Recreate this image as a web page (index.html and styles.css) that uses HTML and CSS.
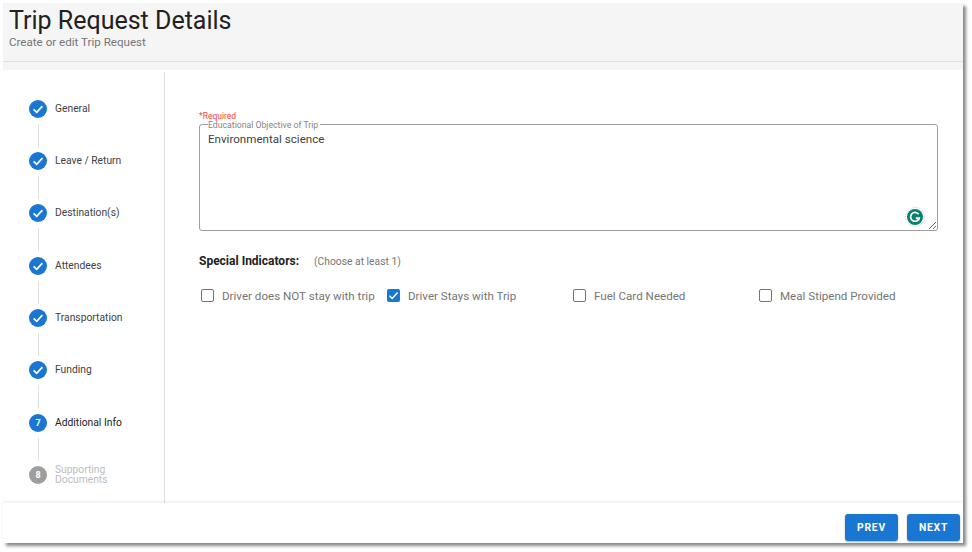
FILE: index.html
```html
<!DOCTYPE html>
<html lang="en">
<head>
<meta charset="utf-8">
<title>Trip Request Details</title>
<link rel="stylesheet" href="styles.css">
</head>
<body>
<div class="window">
  <header class="page-header">
    <div class="header-text">
      <h1 class="title">Trip Request Details</h1>
      <p class="subtitle">Create or edit Trip Request</p>
    </div>
    <div class="header-strip"></div>
  </header>
  <div class="main">
    <nav class="stepper">
      <div class="step"><span class="dot"><svg class="check" viewBox="0 0 18 18"><path d="M4.6 9.4 7.7 12.4 13.4 6.2"/></svg></span><span class="step-label">General</span></div>
      <div class="connector"></div>
      <div class="step"><span class="dot"><svg class="check" viewBox="0 0 18 18"><path d="M4.6 9.4 7.7 12.4 13.4 6.2"/></svg></span><span class="step-label">Leave / Return</span></div>
      <div class="connector"></div>
      <div class="step"><span class="dot"><svg class="check" viewBox="0 0 18 18"><path d="M4.6 9.4 7.7 12.4 13.4 6.2"/></svg></span><span class="step-label">Destination(s)</span></div>
      <div class="connector"></div>
      <div class="step"><span class="dot"><svg class="check" viewBox="0 0 18 18"><path d="M4.6 9.4 7.7 12.4 13.4 6.2"/></svg></span><span class="step-label">Attendees</span></div>
      <div class="connector"></div>
      <div class="step"><span class="dot"><svg class="check" viewBox="0 0 18 18"><path d="M4.6 9.4 7.7 12.4 13.4 6.2"/></svg></span><span class="step-label">Transportation</span></div>
      <div class="connector"></div>
      <div class="step"><span class="dot"><svg class="check" viewBox="0 0 18 18"><path d="M4.6 9.4 7.7 12.4 13.4 6.2"/></svg></span><span class="step-label">Funding</span></div>
      <div class="connector"></div>
      <div class="step"><span class="dot">7</span><span class="step-label step-label-active">Additional Info</span></div>
      <div class="connector"></div>
      <div class="step"><span class="dot dot-disabled">8</span><span class="step-label step-label-disabled">Supporting<br>Documents</span></div>
    </nav>
    <section class="content">
      <div class="required">*Required</div>
      <fieldset class="field">
        <legend class="field-legend">Educational Objective of Trip</legend>
        <textarea class="field-input">Environmental science</textarea>
        <span class="grammarly"><svg viewBox="0 0 20 20" class="grammarly-icon"><circle cx="10" cy="10" r="9.5" fill="#fff" stroke="#e4e4e4" stroke-width="1"/><circle cx="10" cy="10" r="8" fill="#07806c"/><path d="M13.6 7.3A4.4 4.4 0 1 0 14.2 11.2H10.8" fill="none" stroke="#fff" stroke-width="1.7"/><path d="M11.8 12.2 14.4 13.8 14.6 11Z" fill="#fff"/></svg></span>
      </fieldset>
      <div class="indicators">
        <span class="indicators-title">Special Indicators:</span>
        <span class="indicators-hint">(Choose at least 1)</span>
      </div>
      <div class="options">
        <label class="option"><span class="box"></span>Driver does NOT stay with trip</label>
        <label class="option"><span class="box box-checked"><svg viewBox="0 0 14 14" class="box-check"><path d="M2.6 7.2 5.6 10.2 11.4 3.8"/></svg></span>Driver Stays with Trip</label>
        <label class="option"><span class="box"></span>Fuel Card Needed</label>
        <label class="option"><span class="box"></span>Meal Stipend Provided</label>
      </div>
    </section>
  </div>
  <footer class="footer">
    <button class="btn">PREV</button>
    <button class="btn">NEXT</button>
  </footer>
</div>
</body>
</html>
```
FILE: styles.css
```css
* { box-sizing: border-box; }
html, body { height: 100%; }
body {
  margin: 0;
  background: #fff;
  font-family: Roboto, "Liberation Sans", sans-serif;
  overflow: hidden;
}
.window {
  margin: 3px 0 0 3px;
  width: 960px;
  height: 540px;
  background: #fff;
  display: flex;
  flex-direction: column;
  box-shadow: 3px 3px 3px #8a8a8a;
}
.page-header { background: #f5f5f5; height: 67px; flex: none; }
.header-text { height: 59px; border-bottom: 1px solid #e0e0e0; padding: 3px 0 0 6px; }
.header-strip { height: 8px; }
.title { margin: 0; font-size: 25px; font-weight: 400; line-height: 29px; color: #212121; }
.subtitle { margin: 0; font-size: 11.6px; line-height: 14px; color: #757575; }
.main { flex: 1; display: flex; min-height: 0; }
.stepper {
  width: 162px;
  flex: none;
  border-right: 1px solid #e0e0e0;
  margin-top: 2px;
  padding: 27.5px 0 0 26px;
}
.step { display: flex; align-items: center; height: 18px; }
.dot {
  width: 18px; height: 18px; border-radius: 50%;
  background: #1976d2; color: #fff;
  font-size: 9px; font-weight: 700;
  display: flex; align-items: center; justify-content: center;
  flex: none;
}
.dot-disabled { background: #9e9e9e; }
.check { width: 18px; height: 18px; fill: none; stroke: #fff; stroke-width: 1.7; }
.step-label { margin-left: 8px; font-size: 10.3px; line-height: 10px; color: #424242; }
.step-label-active { color: #212121; }
.step-label-disabled { color: #bdbdbd; }
.connector { width: 1px; height: 23px; margin: 6px 0 5.35px 8.5px; background: #e0e0e0; }
.content { flex: 1; min-width: 0; padding: 43px 25px 0 34px; }
.required { font-size: 8.5px; line-height: 7px; color: #f44336; height: 7px; }
.field {
  position: relative;
  margin: 0;
  padding: 0 0 0 8px;
  height: 111px;
  border: 1px solid #9e9e9e;
  border-radius: 3px;
}
.field-legend { position: relative; top: 1px; padding: 0 2px 0 0; font-size: 8.7px; line-height: 9px; color: #858585; }
.field-input {
  display: block;
  width: 100%;
  height: 100%;
  border: 0;
  outline: 0;
  padding: 1.5px 0 0;
  background: transparent;
  resize: both;
  font: 11.6px/16px Roboto, sans-serif;
  color: #424242;
}
.grammarly { position: absolute; right: 12px; bottom: 3px; width: 20px; height: 20px; }
.grammarly-icon { display: block; width: 20px; height: 20px; }
.indicators { margin-top: 23px; display: flex; align-items: baseline; line-height: 14px; }
.indicators-title { font-size: 12px; font-weight: 700; color: #212121; }
.indicators-hint { margin-left: 15px; font-size: 10.3px; color: #757575; }
.options { display: grid; grid-template-columns: repeat(4, 186px); margin-top: 19.5px; }
.option { display: flex; align-items: center; padding-left: 2px; font-size: 11.6px; line-height: 14px; color: #757575; height: 14px; }
.box {
  width: 13px; height: 13px; margin-right: 8px; flex: none;
  border: 1.5px solid #757575; border-radius: 2px; background: #fff;
}
.box-checked { border: 0; background: #1976d2; }
.box-check { display: block; width: 13px; height: 13px; fill: none; stroke: #fff; stroke-width: 1.6; }
.footer {
  position: relative;
  height: 40px; flex: none;
  background: #fff;
  box-shadow: 0 -2px 3px rgba(0,0,0,.06);
  display: flex; justify-content: flex-end; align-items: flex-start;
  gap: 9px;
  padding: 11px 3px 0 0;
}
.btn {
  width: 53px; height: 27px;
  border: 0; border-radius: 3px;
  background: #1976d2; color: #fff;
  font: 700 10.3px Roboto, sans-serif;
  letter-spacing: .8px;
  box-shadow: 0 1px 2px rgba(0,0,0,.3);
  padding: 0;
}
```
